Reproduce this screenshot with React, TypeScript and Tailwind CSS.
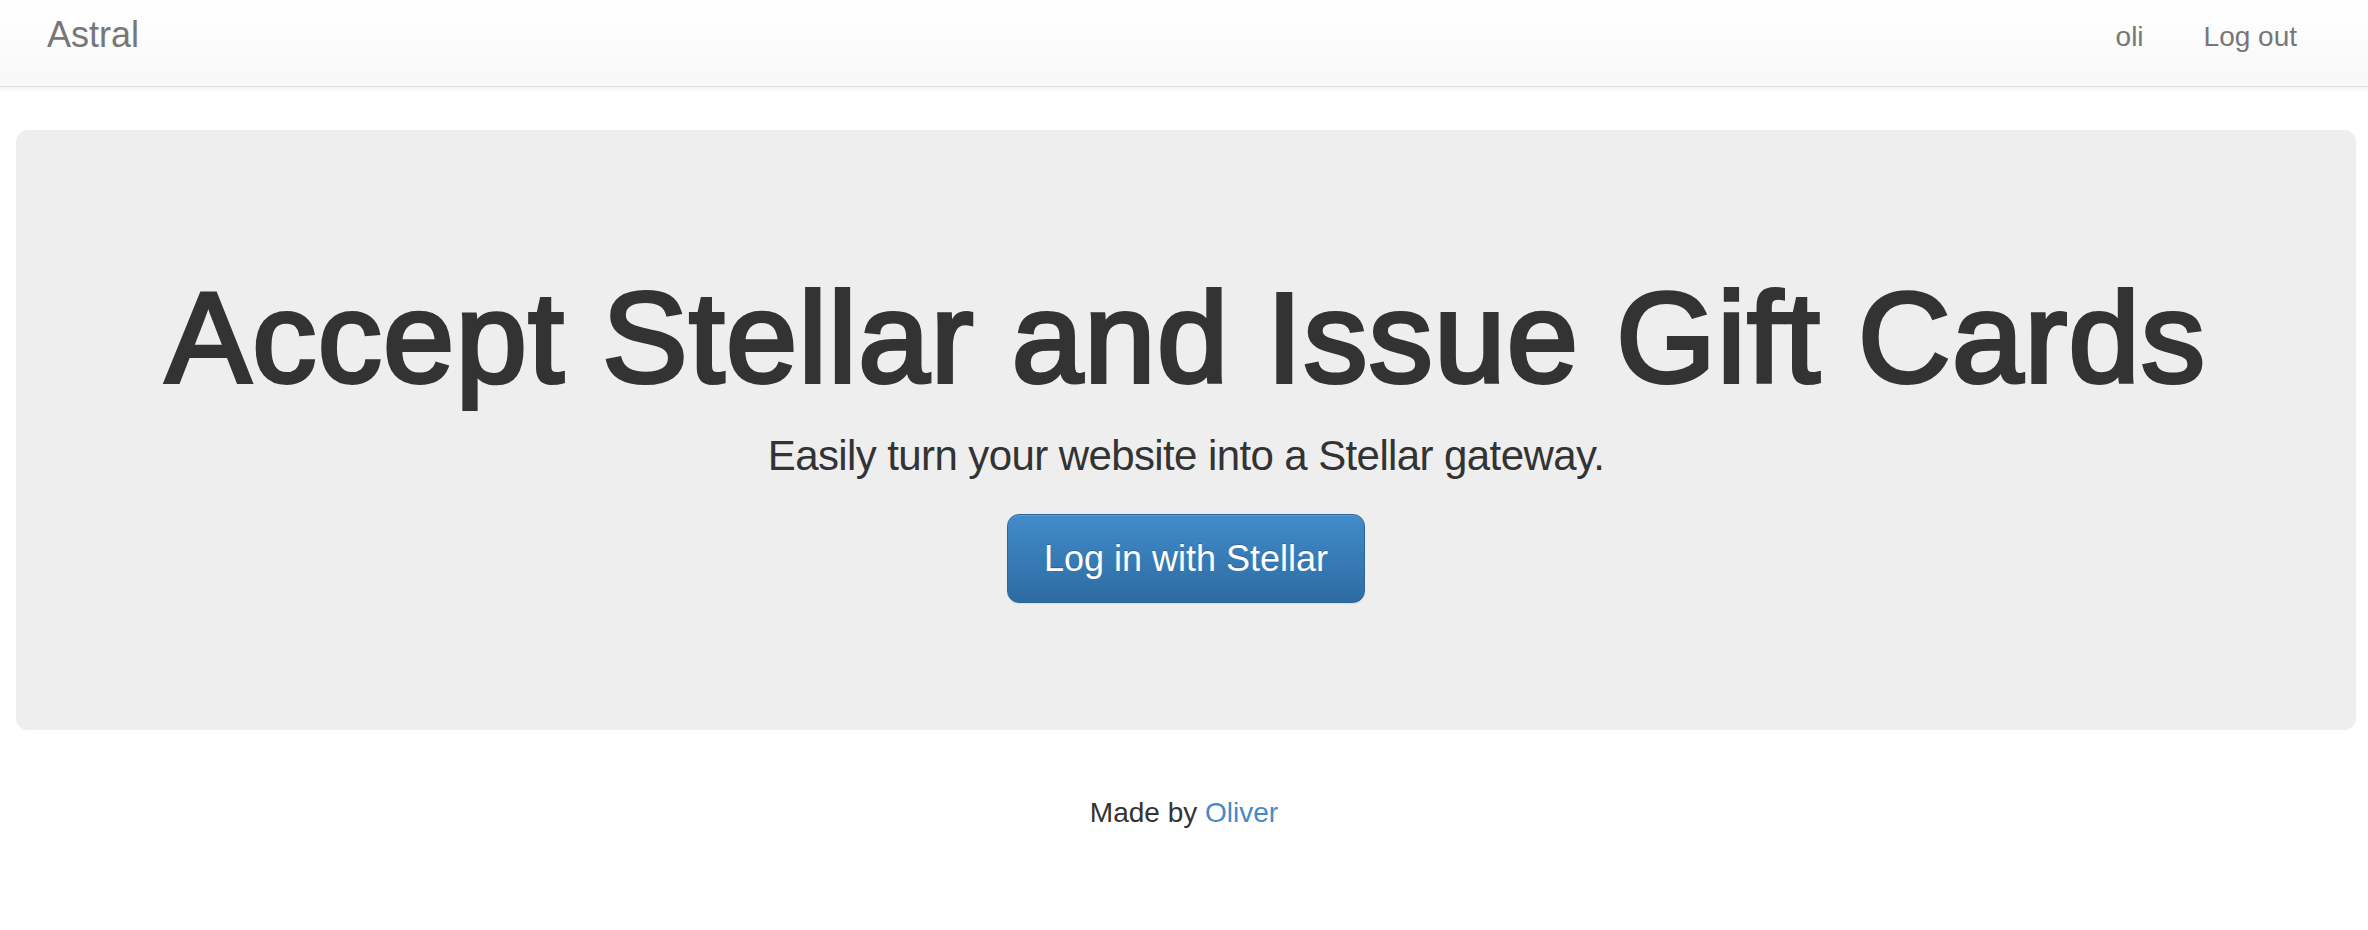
import React from "react";

export default function App() {
  return (
    <div className="min-h-[930px] bg-white text-[#333]" style={{ fontFamily: '"Liberation Sans", Arial, Helvetica, sans-serif' }}>
      <nav className="h-[87px] border-b border-[#e0e0e0] bg-gradient-to-b from-white to-[#f8f8f8] shadow-[inset_0_1px_0_rgba(255,255,255,0.15),0_1px_5px_rgba(0,0,0,0.075)] flex justify-between">
        <div className="pl-[47px] pt-[17px] text-[36px] leading-[36px] text-[#777]">Astral</div>
        <div className="flex pr-[71px] pt-[23px] text-[28px] leading-[28px] text-[#777] gap-[60px]">
          <span>oli</span>
          <span>Log out</span>
        </div>
      </nav>
      <div className="mt-[43px] ml-[16px] mr-[12px] h-[600px] rounded-[12px] bg-[#eeeeee] flex flex-col items-center pt-[138px]">
        <h1 className="text-[128px] leading-[140px] tracking-[1.4px] text-[#333] font-normal whitespace-nowrap [-webkit-text-stroke:4px_#333]">
          Accept Stellar and Issue Gift Cards
        </h1>
        <p className="mt-[18px] text-[42px] leading-[60px] tracking-[-0.6px] text-[#333] whitespace-nowrap">
          Easily turn your website into a Stellar gateway.
        </p>
        <button className="mt-[28px] h-[89px] w-[358px] rounded-[12px] border border-[#2b669a] bg-gradient-to-b from-[#428bca] to-[#2d6ca2] text-white text-[36px] leading-[48px] shadow-[inset_0_1px_0_rgba(255,255,255,0.15),0_1px_1px_rgba(0,0,0,0.075)] [text-shadow:0_-1px_0_rgba(0,0,0,0.2)]">
          Log in with Stellar
        </button>
      </div>
      <footer className="mt-[63px] text-center text-[28px] leading-[40px] text-[#333]">
        Made by <span className="text-[#428bca]">Oliver</span>
      </footer>
    </div>
  );
}
